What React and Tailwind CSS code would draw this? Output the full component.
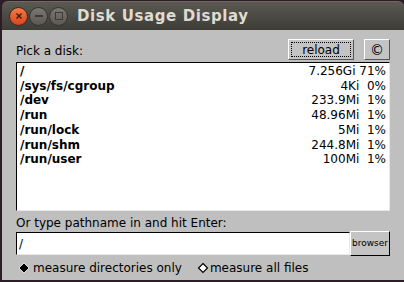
import React from 'react';

const disks = [
  ['/', '7.256Gi 71%'],
  ['/sys/fs/cgroup', '4Ki  0%'],
  ['/dev', '233.9Mi  1%'],
  ['/run', '48.96Mi  1%'],
  ['/run/lock', '5Mi  1%'],
  ['/run/shm', '244.8Mi  1%'],
  ['/run/user', '100Mi  1%'],
];

export default function App() {
  return (
    <div className="w-[404px] h-[282px] bg-[#2c1d29] overflow-hidden" style={{ fontFamily: '"DejaVu Sans", sans-serif' }}>
      {/* title bar */}
      <div className="h-[29px] mt-[1px] ml-[2px] rounded-t-[6px] bg-gradient-to-b from-[#5b5952] to-[#3d3c37] flex items-center border-t border-[#6d6a62]">
        <div className="flex items-center gap-[1px] ml-[7px]">
          <div className="w-[19px] h-[19px] rounded-full bg-gradient-to-b from-[#f37847] to-[#d9451b] border border-[#3a2a22] flex items-center justify-center">
            <svg width="8" height="8" viewBox="0 0 8 8"><path d="M1.5 1.5 L6.5 6.5 M6.5 1.5 L1.5 6.5" stroke="#3b1a0d" strokeWidth="1.4" /></svg>
          </div>
          <div className="w-[19px] h-[19px] rounded-full bg-gradient-to-b from-[#7a7870] to-[#5a5852] border border-[#35342f] flex items-center justify-center">
            <div className="w-[8px] h-[2px] bg-[#3a3934]" />
          </div>
          <div className="w-[19px] h-[19px] rounded-full bg-gradient-to-b from-[#7a7870] to-[#5a5852] border border-[#35342f] flex items-center justify-center">
            <div className="w-[8px] h-[8px] border-[1.5px] border-[#3a3934]" />
          </div>
        </div>
        <span className="ml-[9px] text-[15px] font-bold text-[#dfdbd2] tracking-[0.6px]">Disk Usage Display</span>
      </div>

      {/* body */}
      <div className="ml-[2px] h-[250px] bg-[#bfbfbf] px-[14px] pt-[9px] text-[12px] text-black">
        <div className="flex items-end h-[23px]">
          <span className="mb-[2px]">Pick a disk:</span>
          <div className="ml-auto flex items-center gap-[10px] mr-[0px] mb-[2px]">
            <button className="w-[66px] h-[21px] bg-[#c4c4c4] border border-t-white border-l-white border-r-[#555] border-b-[#555] p-[2px]">
              <div className="w-full h-full border border-dotted border-black flex items-center justify-center leading-none">reload</div>
            </button>
            <button className="w-[26px] h-[21px] bg-[#c4c4c4] border border-t-white border-l-white border-r-[#555] border-b-[#555] flex items-center justify-center text-[14px] leading-none">©</button>
          </div>
        </div>

        <div className="w-[374px] h-[149px] bg-white border border-t-black border-l-black border-r-[#e8e8e8] border-b-[#e8e8e8] px-[3px] pt-[1px] leading-[14.7px]">
          {disks.map(([p, s]) => (
            <div key={p} className="flex justify-between">
              <span className="font-bold">{p}</span>
              <span className="whitespace-pre">{s}</span>
            </div>
          ))}
        </div>

        <div className="mt-[5px] leading-[15px]">Or type pathname in and hit Enter:</div>
        <div className="flex items-center">
          <div className="w-[334px] h-[23px] bg-white border border-t-black border-l-black border-r-[#e8e8e8] border-b-[#e8e8e8] flex items-center pl-[2px]">/</div>
          <button className="w-[40px] h-[25px] bg-[#c4c4c4] border border-t-white border-l-white border-r-black border-b-black text-[9px] leading-none flex items-center justify-center">browser</button>
        </div>

        <div className="flex items-center mt-[4px] h-[16px]">
          <svg width="12" height="12" viewBox="0 0 12 12" className="ml-[2px]"><path d="M6 1 L11 6 L6 11 L1 6 Z" fill="#000" stroke="#fff" strokeWidth="0.8" /></svg>
          <span className="ml-[3px]">measure directories only</span>
          <svg width="12" height="12" viewBox="0 0 12 12" className="ml-[15px]"><path d="M6 1.5 L10.5 6 L6 10.5 L1.5 6 Z" fill="#fff" stroke="#000" strokeWidth="1.2" /></svg>
          <span className="ml-[1px]">measure all files</span>
        </div>
      </div>
    </div>
  );
}
